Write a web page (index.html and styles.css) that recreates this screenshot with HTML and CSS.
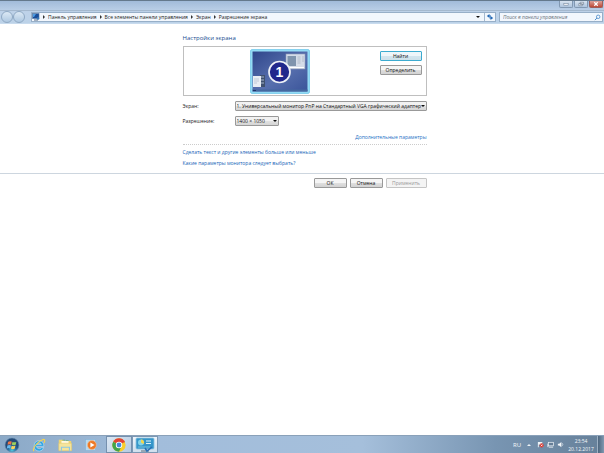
FILE: index.html
```html
<!DOCTYPE html>
<html lang="ru">
<head>
<meta charset="utf-8">
<title>Разрешение экрана</title>
<link rel="stylesheet" href="styles.css">
</head>
<body>
<header class="frame">
  <div class="titlebar">
    <button class="win" aria-label="Свернуть"><svg viewBox="0 0 14 7"><rect x="4.500" y="3" width="5" height="1.800" fill="#fff" stroke="#687b91" stroke-width=".6"/></svg></button>
    <button class="win" aria-label="Развернуть"><svg viewBox="0 0 14 7"><path d="M6 1.500h4v2.500H6zM4.500 3h4v2.500h-4z" fill="#fff" stroke="#607289" stroke-width=".7"/></svg></button>
    <button class="win close" aria-label="Закрыть"><svg viewBox="0 0 14 7"><path d="M5 1.500l4 4M9 1.500l-4 4" stroke="#fff" stroke-width="1.400"/></svg></button>
  </div>
  <div class="navbar">
    <button class="round" aria-label="Назад"></button>
    <button class="round" aria-label="Вперёд"></button>
    <nav class="address">
      <svg class="pc" viewBox="0 0 8 8"><rect x=".5" y=".5" width="6.500" height="5" fill="#174d9a" stroke="#5b7ba3" stroke-width=".6"/><path d="M1 1h3L2 4H1z" fill="#4c9be0"/><path d="M2 7h4" stroke="#566d88"/><circle cx="6" cy="5.500" r="1.300" fill="#3677b8"/></svg>
      <i class="tri"></i><a href="#">Панель управления</a>
      <i class="tri"></i><a href="#">Все элементы панели управления</a>
      <i class="tri"></i><a href="#">Экран</a>
      <i class="tri"></i><a href="#">Разрешение экрана</a>
      <i class="down"></i>
      <button class="refresh" aria-label="Обновить"><svg viewBox="0 0 8 8"><path d="M3.500 1L.8 3l2.700 2zM4.500 3l2.700 2-2.700 2z" fill="#2368b5"/><path d="M3 3h2M5 5H3.500" stroke="#2368b5"/></svg></button>
    </nav>
    <label class="search"><input type="text" placeholder="Поиск в панели управления" aria-label="Поиск в панели управления"><svg viewBox="0 0 8 8"><circle cx="4.800" cy="3.200" r="2" fill="none" stroke="#4385c5" stroke-width=".9"/><path d="M3.300 4.700L1 7" stroke="#4385c5" stroke-width="1.100"/></svg></label>
  </div>
</header>
<main>
  <section class="column settings">
    <h1>Настройки экрана</h1>
    <div class="preview">
      <svg class="monitor" viewBox="0 0 60 45" role="img" aria-label="Монитор 1">
        <defs><linearGradient id="desk" x2="1" y2="1"><stop offset="0" stop-color="#2f468b"/><stop offset=".55" stop-color="#5870ae"/><stop offset="1" stop-color="#3a549a"/></linearGradient></defs>
        <rect x=".7" y=".7" width="58.600" height="43.600" rx="1" fill="#9be0f8" stroke="#70c8ea"/>
        <rect x="2.500" y="2.500" width="55" height="40" fill="url(#desk)"/>
        <path d="M2.500 40.500h55v2h-55z" fill="#45699f"/><path d="M3 41.500h3" stroke="#1d3568"/>
        <rect x="36" y="5" width="19" height="15" fill="#d4dce8" stroke="#8e9cb8" stroke-width=".6"/>
        <rect x="37.500" y="7" width="8.500" height="10" fill="#7f94ad"/><path d="M47.500 8h3M47.500 10h3M47.500 12h3M47.500 14h3M52 8h2M52 10h2M52 12h2" stroke="#a5afbf" stroke-width=".7"/><path d="M37 18.500h17" stroke="#fff"/>
        <rect x="10" y="26" width="5" height="12" fill="#40516f"/><path d="M11 28h3M11 31h3M11 34h3" stroke="#a5b6cc"/>
        <rect x="3" y="27" width="8" height="11" fill="#e9edf3"/><path d="M4 30h5M4 32h5M4 34h3" stroke="#a9b4c6" stroke-width=".6"/>
        <circle cx="29.500" cy="23" r="10.500" fill="#20278c" stroke="#eef1f7" stroke-width="1.700"/>
        <text class="number" x="29.500" y="28" text-anchor="middle">1</text>
      </svg>
      <div class="actions"><button class="btn primary">Найти</button><button class="btn">Определить</button></div>
    </div>
    <div class="row"><label for="screen">Экран:</label><span class="pick wide"><select id="screen"><option>1. Универсальный монитор PnP на Стандартный VGA графический адаптер</option></select></span></div>
    <div class="row"><label for="resolution">Разрешение:</label><span class="pick"><select id="resolution"><option>1400 × 1050</option></select></span></div>
    <p class="more"><a href="#">Дополнительные параметры</a></p>
    <p class="help"><a href="#">Сделать текст и другие элементы больше или меньше</a></p>
    <p class="help"><a href="#">Какие параметры монитора следует выбрать?</a></p>
  </section>
  <div class="footer"><div class="column buttons"><button class="btn">ОК</button><button class="btn">Отмена</button><button class="btn apply" disabled>Применить</button></div></div>
</main>
<footer class="taskbar">
  <button class="task start" aria-label="Пуск"><svg viewBox="0 0 18 18"><defs><radialGradient id="orb" cy=".9"><stop offset="0" stop-color="#51c7df"/><stop offset=".6" stop-color="#28689b"/><stop offset="1" stop-color="#254b78"/></radialGradient></defs><circle cx="9" cy="9" r="7.800" fill="url(#orb)" stroke="#6589ac" stroke-width=".6"/><path d="M4.500 5.500Q6.500 4 8.700 5.200L8 8.600Q6 7.700 4 8.800z" fill="#ee7545"/><path d="M9.500 5.500q2.200 1 4.300 0L13 9q-2 .8-4.200-.2z" fill="#9cd15c"/><path d="M3.800 9.600q2-1 4-.1l-.7 3.500q-2-1-4 0z" fill="#68b8ec"/><path d="M8.600 9.800q2.200 1 4.200 0l-.8 3.500q-2 1-4.100 0z" fill="#fbd35a"/></svg></button>
  <button class="task" aria-label="Internet Explorer"><svg viewBox="0 0 18 18"><path fill-rule="evenodd" d="M14.500 10.500H6q.3 2.600 3.500 2.600 1.700 0 2.500-1.200h2.300q-1.300 4-5 4Q3.500 15.500 3.500 10.100 3.800 4.300 9.200 4.100q5.300.3 5.300 6.400zM6 8.500h5.700Q11.200 6.500 8.900 6.500T6 8.500z" fill="#2fa5e4" stroke="#e4f7fd" stroke-width=".5"/><path d="M3.300 16C1 13.500 7 5 13.500 2.800c2.500-.6 2.400 1.800 1 4" fill="none" stroke="#f2d254" stroke-width="1.300"/></svg></button>
  <button class="task" aria-label="Проводник"><svg viewBox="0 0 18 18"><path d="M2 3h5l1 1.500h8V15H2z" fill="#efd574"/><path d="M5 4.500h8V10H5z" fill="#fffbe1"/><path d="M6 3.500h3M10 4h3" stroke="#77b67d"/><path d="M2 7h14.500v8.500H2z" fill="#f5e49b" stroke="#dac065" stroke-width=".5"/><path d="M5 15.500v-4h9v4" fill="none" stroke="#8cc8e4" stroke-width="1.300"/></svg></button>
  <button class="task" aria-label="Проигрыватель"><svg viewBox="0 0 18 18"><rect x="3" y="3" width="11" height="12" fill="#b9d9ee" stroke="#83b4d9" stroke-width=".6"/><circle cx="10" cy="9" r="5" fill="#ed7926" stroke="#f7c193" stroke-width=".6"/><path d="M8.300 6.300L13 9l-4.700 2.700z" fill="#fff"/></svg></button>
  <button class="task open" aria-label="Chrome"><svg viewBox="0 0 18 18"><circle cx="9" cy="9" r="7.500" fill="#f8cd2b"/><path d="M9 9L2.500 5.250A7.500 7.500 0 0 1 15.500 5.250z" fill="#e14436"/><path d="M9 9L2.500 5.250A7.500 7.500 0 0 0 9 16.500L12 10z" fill="#42a44b"/><path d="M9 5.500h6.500" stroke="#e14436"/><circle cx="9" cy="9" r="3.600" fill="#fff"/><circle cx="9" cy="9" r="2.700" fill="#438ade"/></svg></button>
  <button class="task open active" aria-label="Разрешение экрана"><svg class="display" viewBox="0 0 20 16"><rect x="1" y="1" width="18" height="11" rx="1" fill="#3596ca" stroke="#8fc4de" stroke-width=".8"/><circle cx="6" cy="5.500" r="3" fill="#83d3e8"/><path d="M6 5.500v-3A3 3 0 0 1 8.700 7z" fill="#f2d64b"/><path d="M11 4h5M11 6.500h5" stroke="#dcf3fc" stroke-width="1.200"/><path d="M3 10h12" stroke="#73c2df"/><path d="M6 14h8" stroke="#8999a6" stroke-width="1.600"/><path d="M10 11l2 3 5-4" fill="none" stroke="#2b70b5" stroke-width="1.600"/></svg></button>
  <div class="tray"><span class="lang">RU</span><i class="up"></i>
    <svg viewBox="0 0 8 8"><path d="M1 1h1v6H1zM2 1h4v3H2z" fill="#eef4f7"/><circle cx="5.300" cy="5" r="2.300" fill="#d93932"/><path d="M4.300 4l2 2M6.300 4l-2 2" stroke="#fff" stroke-width=".8"/></svg>
    <svg viewBox="0 0 8 8"><rect x="1.500" y="1.500" width="6" height="4" fill="#667e97" stroke="#edf3f7" stroke-width=".8"/><path d="M2 7h5M1 3v4" stroke="#edf3f7"/></svg>
    <svg viewBox="0 0 8 8"><path d="M1 3h1.500L5 1v6L2.500 5H1z" fill="#f4f7fa"/><path d="M6 2.500q1.300 1.500 0 3" fill="none" stroke="#f4f7fa" stroke-width=".7"/></svg>
    <time class="clock">23:54<br>20.12.2017</time></div>
  <button class="desktop" aria-label="Показать рабочий стол"></button>
</footer>
</body>
</html>
```
FILE: styles.css
```css
* { box-sizing: border-box; }
body { margin: 0; min-height: 100vh; display: flex; flex-direction: column; background: #fff; color: #222; font: 5px/8px "Open Sans", "Noto Sans", sans-serif; }
button, input, select { margin: 0; padding: 0; color: inherit; font: inherit; }
button { border: 0; background: none; }
a { color: inherit; text-decoration: none; }
svg { display: block; }
h1, p { margin: 0; }
.frame { padding-bottom: 1px; background: linear-gradient(#a1bbda, #bed2e9 11px, #bcd2e8 22px, #d3e3f3); border-top: 1px solid #64798d; }
.titlebar { display: flex; justify-content: flex-end; height: 9px; padding-right: 1px; gap: 1px; }
.win { width: 14px; height: 7px; border: 1px solid #8198b2; border-top: 0; border-radius: 0 0 2px 2px; background: linear-gradient(#d7e3f0, #aec4dd); }
.win svg { width: 100%; height: 100%; }
.close { border-color: #9c5d59; background: linear-gradient(#dda29a, #bd4835); }
.navbar { display: flex; align-items: center; height: 13px; padding: 0 1px; border-top: 1px solid #a4b8ce; }
.round { width: 12px; height: 12px; border: 1px solid #8fa9c4; border-radius: 50%; background: linear-gradient(#dce9f5, #aec8e1); }
.address { flex: 1; display: flex; align-items: center; height: 10px; margin-left: 6px; border: 1px solid #97afc8; background: #f2f7fd; }
.pc { width: 8px; height: 8px; }
.tri { margin: 0 3px; border: 2px solid transparent; border-left: 2px solid #333; border-right: 0; }
.down { margin: 0 4px 0 auto; border: 2px solid transparent; border-top-color: #111; border-bottom: 0; }
.refresh { width: 11px; height: 8px; padding-left: 1px; border-left: 1px solid #a5b9cf; }
.refresh svg { width: 8px; height: 8px; }
.search { display: flex; align-items: center; width: 104px; height: 10px; margin-left: 3px; padding: 0 1px 0 3px; border: 1px solid #97afc8; background: #f2f7fd; }
.search input { flex: 1; min-width: 0; height: 8px; border: 0; background: none; font-style: italic; }
.search input::placeholder { color: #6b737c; }
.search svg { width: 7px; height: 7px; }
main { flex: 1; padding-left: 5px; }
.column { width: 244px; max-width: 100%; margin: 0 auto; }
.settings { padding-top: 9px; }
h1 { color: #164b91; font-size: 6px; line-height: 10px; font-weight: 400; }
.preview { display: flex; justify-content: space-between; height: 50px; margin: 3px 0 5px; padding: 2px 4px 2px 66px; border: 1px solid #bfbfbf; }
.monitor { width: 60px; height: 45px; }
.number { fill: #fff; font: bold 14px "Liberation Sans", sans-serif; }
.actions { display: flex; flex-direction: column; gap: 4px; padding-top: 2px; }
.btn { width: 33px; height: 10px; border: 1px solid #999; border-radius: 1px; background: linear-gradient(#f5f5f5 45%, #dedede 55%, #d2d2d2); color: #111; line-height: 7px; }
.actions .btn { width: 42px; }
.btn.primary { border-color: #3cabd0; background: linear-gradient(#eef6fa 45%, #d3e5ee 55%, #cde1ea); }
.row { display: flex; align-items: center; height: 10px; margin-bottom: 5px; }
.row label { width: 52px; }
.pick { position: relative; width: 44px; height: 10px; }
.pick.wide { flex: 1; }
.pick::after { content: ""; position: absolute; top: 4px; right: 2px; border: 2px solid transparent; border-top-color: #111; border-bottom: 0; pointer-events: none; }
.pick select { display: block; width: 100%; height: 100%; padding-left: 1px; border: 1px solid #999; border-radius: 1px; appearance: none; background: linear-gradient(#f2f2f2 45%, #e0e0e0 55%, #d5d5d5); color: #111; line-height: 8px; }
.more { margin-top: 8px; padding-bottom: 3px; border-bottom: 1px dotted #ccc; text-align: right; line-height: 7px; color: #2672c5; }
.help { padding-top: 3px; line-height: 8px; color: #1664b7; }
.footer { margin: 6px 0 0 -5px; padding: 4px 0 0 5px; border-top: 1px solid #cdd6df; }
.buttons { display: flex; justify-content: flex-end; gap: 3px; }
.btn.apply { width: 41px; border-color: #c5c5c5; background: #f4f4f4; color: #999; }
.taskbar { display: flex; align-items: stretch; height: 18px; border-top: 1px solid #8aa1b9; background: linear-gradient(90deg, #8ba9c7, #a2bddb 25%, #a5bfdb 60%, #7895b2 82%, #668099); }
.task { display: flex; align-items: center; justify-content: center; width: 26px; }
.task svg { width: 16px; height: 16px; }
.task .display { width: 20px; }
.start { width: 24px; margin-right: 2px; }
.task.open { border: 1px solid #7590ae; background: linear-gradient(135deg, #dce8f4, #b4cae1); }
.task:not(.open) + .open { margin-left: 2px; }
.task.open.active { border-color: #7c98b4; background: linear-gradient(#eef5fb, #cfdeed); }
.tray { display: flex; align-items: center; gap: 3px; margin-left: auto; color: #f4f7fa; }
.tray svg { width: 7px; height: 7px; }
.lang { margin-right: 3px; font-size: 6px; }
.up { margin-right: 3px; border: 2px solid transparent; border-bottom-color: #eef4f7; border-top: 0; }
.clock { width: 28px; text-align: center; }
.desktop { width: 7px; margin-left: 2px; border-left: 1px solid #9eb1c4; background: linear-gradient(90deg, #4d667e, #8199b1); }
```
